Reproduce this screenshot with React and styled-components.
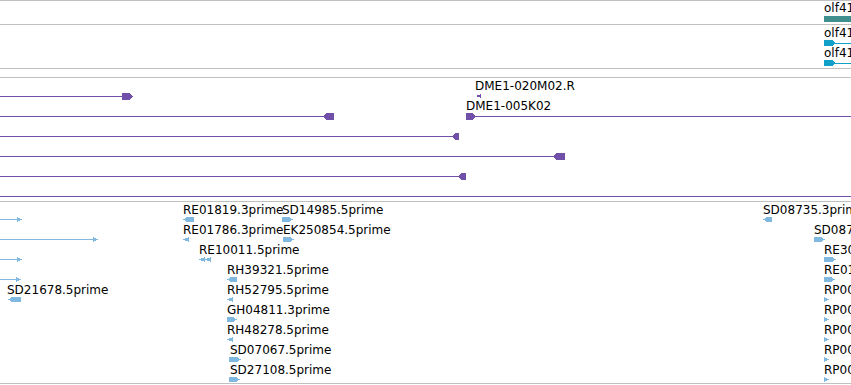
import React from 'react'
import styled, { createGlobalStyle } from 'styled-components'

const GRID = '#c0c0c0'
const PURPLE = '#7050a8'
const SKY = '#80b8e0'
const CYAN = '#10a0c8'
const TEAL = '#3f8f8f'

const GlobalStyle = createGlobalStyle`
  html, body {
    margin: 0;
    padding: 0;
    background: #fff;
  }
  body {
    font-family: 'DejaVu Sans', sans-serif;
  }
`

const Browser = styled.div`
  width: 851px;
  overflow: hidden;
`

const TrackGroup = styled.section`
  display: flex;
  flex-direction: column;
  border-top: 1px solid ${GRID};
  margin-top: ${p => p.$gap || 0}px;
`

const Track = styled.div`
  display: flex;
  flex-direction: column;
  height: ${p => p.$height}px;
  border-bottom: 1px solid ${GRID};
  overflow: hidden;
`

const Lane = styled.div`
  position: relative;
  flex: 0 0 20px;
`

const Label = styled.span`
  position: absolute;
  top: ${p => p.$top}px;
  font-family: 'DejaVu Sans', sans-serif;
  font-size: 12px;
  line-height: 12px;
  color: #000;
  white-space: nowrap;
`

const Glyph = styled.svg`
  position: absolute;
  top: ${p => 15 + p.$dy}px;
  display: block;
  overflow: visible;
`

const Strand = styled.div`
  position: absolute;
  top: ${p => p.$top}px;
  height: 1px;
  background: ${p => p.$color};
`

const tracks = [
  {
    group: 0,
    height: 23,
    color: TEAL,
    lanes: [[{ label: 'olf413', labelTop: 1, x: 824, w: 27, h: 6, kind: 'bar' }]],
  },
  {
    group: 0,
    height: 43,
    color: CYAN,
    lanes: [
      [{ label: 'olf413-RA', x: 824, w: 12, h: 6, kind: 'right', line: [835, 851] }],
      [{ label: 'olf413-RB', x: 824, w: 12, h: 6, kind: 'right', line: [835, 851] }],
    ],
  },
  {
    group: 1,
    height: 123,
    color: PURPLE,
    lanes: [
      [
        { x: 122, w: 11, h: 7, kind: 'right', line: [0, 123] },
        { label: 'DME1-020M02.R', x: 475, w: 6, h: 4, dy: 1, kind: 'tipLeft' },
      ],
      [
        { x: 323, w: 11, h: 7, kind: 'left', line: [0, 324] },
        { label: 'DME1-005K02', x: 466, w: 10, h: 7, kind: 'right', line: [475, 851] },
      ],
      [{ x: 452, w: 7, h: 7, kind: 'left', line: [0, 453] }],
      [{ x: 553, w: 12, h: 7, kind: 'left', line: [0, 554] }],
      [{ x: 458, w: 8, h: 7, kind: 'left', line: [0, 459] }],
      [{ h: 7, line: [0, 851] }],
    ],
  },
  {
    group: 1,
    height: 181,
    color: SKY,
    lanes: [
      [
        { x: 17, w: 5, kind: 'tipRight', line: [0, 18] },
        { label: 'RE01819.3prime', x: 183, w: 11, kind: 'left' },
        { label: 'SD14985.5prime', x: 282, w: 11, kind: 'right' },
        { label: 'SD08735.3prime', x: 763, w: 9, kind: 'left' },
      ],
      [
        { x: 93, w: 5, kind: 'tipRight', line: [0, 94] },
        { label: 'RE01786.3prime', x: 183, w: 6, kind: 'tipLeft' },
        { label: 'EK250854.5prime', x: 283, w: 11, kind: 'right' },
        { label: 'SD08735.5prime', x: 814, w: 11, kind: 'right' },
      ],
      [
        { x: 17, w: 5, kind: 'tipRight', line: [0, 18] },
        { label: 'RE10011.5prime', x: 199, w: 12, kind: 'doubleLeft' },
        { label: 'RE30512.5prime', x: 824, w: 12, kind: 'right' },
      ],
      [
        { x: 16, w: 5, kind: 'tipRight', line: [0, 17] },
        { label: 'RH39321.5prime', x: 227, w: 10, kind: 'left' },
        { label: 'RE01446.5prime', x: 824, w: 11, kind: 'right' },
      ],
      [
        { label: 'SD21678.5prime', x: 8, labelX: 7, w: 13, kind: 'left' },
        { label: 'RH52795.5prime', x: 227, w: 6, kind: 'tipLeft' },
        { label: 'RP00217.5prime', x: 824, w: 5, kind: 'tipRight' },
      ],
      [
        { label: 'GH04811.3prime', x: 227, w: 10, kind: 'right' },
        { label: 'RP00231.5prime', x: 824, w: 5, kind: 'tipRight' },
      ],
      [
        { label: 'RH48278.5prime', x: 227, w: 6, kind: 'tipLeft' },
        { label: 'RP00246.5prime', x: 824, w: 5, kind: 'tipRight' },
      ],
      [
        { label: 'SD07067.5prime', x: 229, labelX: 230, w: 12, kind: 'right' },
        { label: 'RP00259.5prime', x: 824, w: 5, kind: 'tipRight' },
      ],
      [
        { label: 'SD27108.5prime', x: 229, labelX: 230, w: 11, kind: 'right' },
        { label: 'RP00263.5prime', x: 824, w: 5, kind: 'tipRight' },
      ],
    ],
  },
]

const points = (kind, w, h) => {
  const m = h / 2
  switch (kind) {
    case 'right':
      return `0,0 ${w - 4},0 ${w},${m} ${w - 4},${h} 0,${h}`
    case 'left':
      return `4,0 ${w},0 ${w},${h} 4,${h} 0,${m}`
    case 'tipRight':
      return `0,0 ${w},${m} 0,${h}`
    case 'tipLeft':
      return `${w},0 0,${m} ${w},${h}`
    default:
      return `0,0 ${w},0 ${w},${h} 0,${h}`
  }
}

const Shape = ({ kind, w, h, dy, color, x }) => (
  <Glyph
    width={w}
    height={h}
    viewBox={`0 0 ${w} ${h}`}
    $dy={dy}
    style={{ left: x }}
    shapeRendering="crispEdges"
  >
    {kind === 'doubleLeft' ? (
      <>
        <polygon points={`6,0 0,${h / 2} 6,${h}`} fill={color} />
        <polygon points={`${w},0 6,${h / 2} ${w},${h}`} fill={color} />
      </>
    ) : (
      <polygon points={points(kind, w, h)} fill={color} />
    )}
  </Glyph>
)

const Feature = ({ f, color }) => {
  const h = f.h || 5
  return (
    <>
      {f.line && (
        <Strand
          $color={color}
          $top={15 + Math.floor(h / 2)}
          style={{ left: f.line[0], width: f.line[1] - f.line[0] }}
        />
      )}
      {f.kind && <Shape kind={f.kind} w={f.w} h={h} dy={f.dy || 0} color={color} x={f.x} />}
      {f.label && (
        <Label $top={f.labelTop ?? 2} style={{ left: f.labelX ?? f.x }}>
          {f.label}
        </Label>
      )}
    </>
  )
}

const TrackView = ({ track }) => (
  <Track $height={track.height}>
    {track.lanes.map((lane, i) => (
      <Lane key={i}>
        {lane.map((f, j) => (
          <Feature key={j} f={f} color={track.color} />
        ))}
      </Lane>
    ))}
  </Track>
)

export default function App() {
  return (
    <>
      <GlobalStyle />
      <Browser>
        <TrackGroup>
          {tracks.filter(t => t.group === 0).map((t, i) => (
            <TrackView key={i} track={t} />
          ))}
        </TrackGroup>
        <TrackGroup $gap={8}>
          {tracks.filter(t => t.group === 1).map((t, i) => (
            <TrackView key={i} track={t} />
          ))}
        </TrackGroup>
      </Browser>
    </>
  )
}
